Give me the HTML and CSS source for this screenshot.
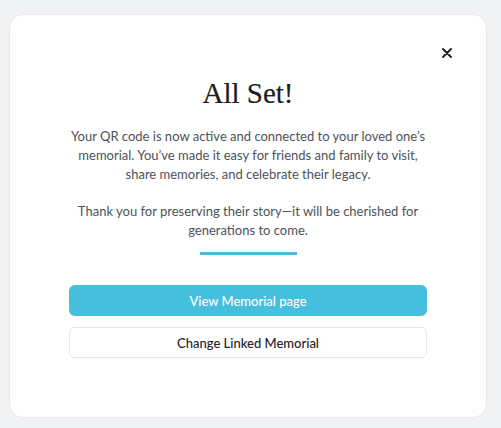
FILE: index.html
```html
<!DOCTYPE html>
<html lang="en">
<head>
<meta charset="utf-8">
<title>All Set</title>
<link rel="stylesheet" href="styles.css">
</head>
<body>
<div class="page">
  <div class="card">
    <button class="close" aria-label="Close">
      <svg width="10" height="10" viewBox="0 0 10 10"><path d="M1 1L9 9M9 1L1 9" stroke="#1a1a1a" stroke-width="1.8" stroke-linecap="round"/></svg>
    </button>
    <h1 class="title">All Set!</h1>
    <p class="text">Your QR code is now active and connected to your loved one’s memorial. You’ve made it easy for friends and family to visit, share memories, and celebrate their legacy.</p>
    <p class="text">Thank you for preserving their story—it will be cherished for generations to come.</p>
    <div class="divider"></div>
    <div class="actions">
      <button class="btn btn-primary">View Memorial page</button>
      <button class="btn btn-outline">Change Linked Memorial</button>
    </div>
  </div>
</div>
</body>
</html>
```
FILE: styles.css
```css
* { box-sizing: border-box; }
html, body { margin: 0; padding: 0; }
body {
  background: #f1f2f4;
  font-family: "Lato", "Noto Sans", sans-serif;
}
.page {
  padding: 14px 14px 10px 9px;
}
.card {
  position: relative;
  background: #ffffff;
  border: 1px solid #e6e8eb;
  border-radius: 14px;
  height: 404px;
  padding: 60px 59px 0 59px;
  display: flex;
  flex-direction: column;
  align-items: center;
}
.close {
  position: absolute;
  top: 33px;
  right: 34px;
  width: 10px;
  height: 10px;
  padding: 0;
  border: 0;
  background: none;
  display: flex;
}
.title {
  margin: 0;
  font-family: "Liberation Serif", "DejaVu Serif", serif;
  font-weight: 400;
  font-size: 29px;
  line-height: 36px;
  color: #1c1c1c;
  -webkit-text-stroke: 0.2px #1c1c1c;
}
.text {
  margin: 16px 0 0;
  font-size: 13px;
  line-height: 19px;
  color: #4d525a;
  text-align: center;
  width: 100%;
}
.text + .text { margin-top: 18px; }
.divider {
  width: 97px;
  height: 3px;
  background: #45bedd;
  margin-top: 12px;
}
.actions {
  width: 100%;
  margin-top: 30px;
  display: flex;
  flex-direction: column;
  gap: 11px;
}
.btn {
  width: 100%;
  height: 31px;
  border-radius: 6px;
  font-family: "Lato", "Noto Sans", sans-serif;
  font-size: 13px;
  font-weight: 500;
  cursor: pointer;
}
.btn-primary {
  background: #46bedd;
  color: #ffffff;
  border: 0;
}
.btn-outline {
  height: 31px;
  background: #ffffff;
  color: #1f2227;
  border: 1px solid #e3e6ea;
}
```
